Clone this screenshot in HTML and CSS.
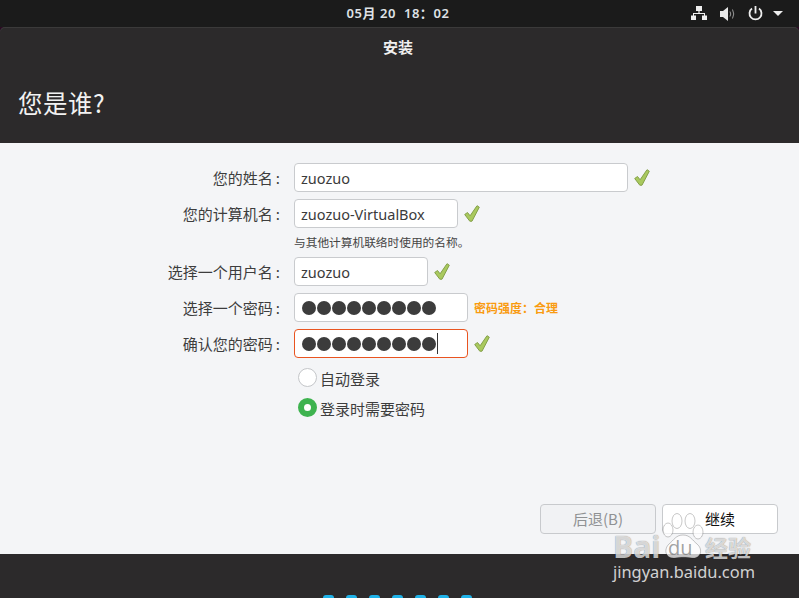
FILE: index.html
```html
<!DOCTYPE html>
<html lang="zh-CN">
<head>
<meta charset="utf-8">
<title>安装</title>
<link rel="stylesheet" href="styles.css">
</head>
<body>
<div class="screen">
  <header class="topbar">
    <div class="clock">05月 20&nbsp;&nbsp;18：02</div>
    <div class="tray">
      <svg class="ic-net" width="16" height="14" viewBox="0 0 16 14"><path fill="#eee" d="M5 0h6v5H8.600v2H14v2.500h2V14h-5V9.500h2V8H3v1.500h2V14H0V9.500h2V7h5.400V5H5z"/></svg>
      <svg class="ic-vol" width="15" height="14" viewBox="0 0 15 14"><path fill="#e8e8e8" d="M0 4h3l5-4v14l-5-4H0z"/><path fill="none" stroke="#999" d="M10 4.500q1.500 2.500 0 5M12.500 2.500q2.500 4.500 0 9"/></svg>
      <svg class="ic-pow" width="15" height="15" viewBox="0 0 15 15"><path fill="none" stroke="#eee" stroke-width="1.800" d="M4 2.600a6 6 0 1 0 7 0M7.500 0v7.500"/></svg>
      <svg class="ic-arrow" width="10" height="5" viewBox="0 0 10 5"><path fill="#eee" d="M0 0h10L5 5z"/></svg>
    </div>
  </header>
  <main class="window">
    <div class="head">
      <div class="title">安装</div>
      <h1 class="heading">您是谁?</h1>
    </div>
    <section class="content">
      <div class="form">
        <div class="row">
          <label class="label">您的姓名&#8201;:</label>
          <div class="field w-name">zuozuo</div>
          <svg class="check" width="16" height="17" viewBox="0 0 16 17"><path fill="#a9c95e" stroke="#84a04a" stroke-linejoin="round" d="M.7 9.500l2.800-2 2.600 3.300L13 .7l2.300 1.500-7.300 14H5.800z"/></svg>
        </div>
        <div class="row">
          <label class="label">您的计算机名&#8201;:</label>
          <div class="field w-host">zuozuo-VirtualBox</div>
          <svg class="check" width="16" height="17" viewBox="0 0 16 17"><path fill="#a9c95e" stroke="#84a04a" stroke-linejoin="round" d="M.7 9.500l2.800-2 2.600 3.300L13 .7l2.300 1.500-7.300 14H5.800z"/></svg>
        </div>
        <div class="hint">与其他计算机联络时使用的名称。</div>
        <div class="row">
          <label class="label">选择一个用户名&#8201;:</label>
          <div class="field w-user">zuozuo</div>
          <svg class="check" width="16" height="17" viewBox="0 0 16 17"><path fill="#a9c95e" stroke="#84a04a" stroke-linejoin="round" d="M.7 9.500l2.800-2 2.600 3.300L13 .7l2.300 1.500-7.300 14H5.800z"/></svg>
        </div>
        <div class="row">
          <label class="label">选择一个密码&#8201;:</label>
          <div class="field w-pass dots"><i></i><i></i><i></i><i></i><i></i><i></i><i></i><i></i><i></i></div>
          <span class="strength">密码强度：合理</span>
        </div>
        <div class="row">
          <label class="label">确认您的密码&#8201;:</label>
          <div class="field w-pass dots focus"><i></i><i></i><i></i><i></i><i></i><i></i><i></i><i></i><i></i><b class="caret"></b></div>
          <svg class="check" width="16" height="17" viewBox="0 0 16 17"><path fill="#a9c95e" stroke="#84a04a" stroke-linejoin="round" d="M.7 9.500l2.800-2 2.600 3.300L13 .7l2.300 1.500-7.300 14H5.800z"/></svg>
        </div>
        <div class="radios">
          <div class="radio"><span class="mark"></span><span class="radio-text">自动登录</span></div>
          <div class="radio"><span class="mark on"></span><span class="radio-text">登录时需要密码</span></div>
        </div>
      </div>
      <div class="actions">
        <button class="btn disabled">后退(B)</button>
        <button class="btn">继续</button>
      </div>
    </section>
    <footer class="foot">
      <div class="pager"><i></i><i></i><i></i><i></i><i></i><i></i><i></i></div>
    </footer>
  </main>
  <div class="watermark">
    <svg class="paw" width="44" height="48" viewBox="0 0 44 48"><g fill="#fff" fill-opacity=".72" stroke="#000" stroke-opacity=".22"><ellipse cx="6" cy="18" rx="5" ry="7"/><ellipse cx="15" cy="9" rx="5" ry="7.500"/><ellipse cx="28" cy="9" rx="5" ry="7.500"/><ellipse cx="36" cy="20" rx="5" ry="7"/><path d="M21 23c7 0 9 5 14 9 7 6 3 15-5 14-5-1-12-1-17 0-9 1-12-8-6-14 5-4 7-9 14-9z"/></g></svg>
    <div class="wm-bai">Bai</div>
    <div class="wm-du">du</div>
    <div class="wm-cn">经验</div>
    <div class="wm-url">jingyan.baidu.com</div>
  </div>
</div>
</body>
</html>
```
FILE: styles.css
```css
* { box-sizing: border-box; }
html, body { margin: 0; padding: 0; }
body { width: 799px; height: 598px; overflow: hidden; font-family: "Open Sans", "Noto Sans CJK SC", sans-serif; }
.screen { position: relative; width: 799px; height: 598px; display: flex; flex-direction: column; background: #2c0a24; overflow: hidden; }
.topbar { height: 27px; flex: none; background: #1b1b1b; display: flex; align-items: center; justify-content: center; position: relative; }
.clock { font: 600 13px/27px "Noto Sans", "Noto Sans CJK SC", sans-serif; color: #dfe2e6; letter-spacing: .55px; margin-left: -3px; }
.tray { position: absolute; right: 16px; top: 6px; display: flex; align-items: flex-start; }
.ic-net { margin-right: 13px; }
.ic-vol { margin-right: 13px; margin-top: 1px; }
.ic-pow { margin-right: 10px; }
.ic-arrow { margin-top: 5px; }
.window { flex: 1; display: flex; flex-direction: column; border-radius: 5px 5px 0 0; overflow: hidden; background: #2c2a2b; box-shadow: inset 0 1px 0 #3b3a3a; }
.head { height: 116px; flex: none; padding-top: 10px; }
.title { font: 700 15px/20px "Noto Sans CJK SC", sans-serif; color: #f0f0f0; text-align: center; padding-right: 3px; }
.heading { margin: 28px 0 0 18px; font: 400 24.500px/36px "Noto Sans CJK SC", sans-serif; color: #f2f2f2; letter-spacing: .5px; }
.content { height: 411px; flex: none; background: #f4f5f7; padding-top: 20px; display: flex; flex-direction: column; }
.form { flex: 1; display: flex; flex-direction: column; }
.row { display: flex; align-items: center; height: 29px; margin-bottom: 7px; }
.label { width: 280px; margin-right: 14px; text-align: right; font: 400 15px/29px "Noto Sans CJK SC", sans-serif; color: #3d3d3d; }
.field { height: 29px; border: 1px solid #c9cbce; border-radius: 4px; background: #fff; padding: 1px 0 0 6px; font: 400 14.500px/27px "Noto Sans", sans-serif; color: #3b3b3b; display: flex; align-items: center; }
.w-name { width: 334px; }
.w-host { width: 164px; }
.w-user { width: 134px; }
.w-pass { width: 174px; }
.check { margin-left: 6px; }
.hint { margin: -2px 0 5px 294px; font: 400 11.700px/16px "Noto Sans CJK SC", sans-serif; color: #444; height: 19px; padding-top: 1px; }
.dots { gap: 1px; padding: 0 0 0 7px; }
.dots i { width: 14px; height: 14px; border-radius: 50%; background: #3c3c3c; }
.focus { border-color: #e95420; }
.caret { width: 1px; height: 21px; background: #333; }
.strength { margin-left: 6px; font: 700 12px/16px "Noto Sans CJK SC", sans-serif; color: #f99b11; }
.radios { margin: 3px 0 0 298px; display: flex; flex-direction: column; gap: 11px; }
.radio { display: flex; align-items: center; height: 19px; color: #3d3d3d; gap: 3px; }
.radio-text { font: 400 15px/19px "Noto Sans CJK SC", sans-serif; padding-top: 2px; }
.mark { width: 19px; height: 19px; border-radius: 50%; background: #fff; border: 1px solid #c4c6c9; flex: none; }
.mark.on { background: #fff; border: 6px solid #3eb34f; }
.actions { display: flex; gap: 6px; justify-content: flex-end; padding: 0 21px 20px 0; }
.btn { width: 116px; height: 30px; border: 1px solid #c8cacd; border-radius: 4px; background: #fff; font: 400 15px/28px "Noto Sans CJK SC", sans-serif; color: #111; padding: 0; }
.btn.disabled { background: #f1f2f4; color: #8f9193; }
.foot { flex: 1; display: flex; justify-content: center; }
.pager { display: flex; gap: 12px; margin-top: 41px; height: 3px; overflow: hidden; margin-left: -5px; }
.pager i { width: 11px; height: 11px; border-radius: 3px; background: #1fb2e8; }
.watermark { position: absolute; left: 613px; top: 510px; width: 150px; height: 75px; }
.paw { position: absolute; left: 49px; top: 2px; }
.wm-bai { position: absolute; left: 0; top: 24px; height: 26px; color: rgba(255,255,255,.72); font: 700 30px/26px "Open Sans", sans-serif; text-shadow: 0 0 1px rgba(0,0,0,.55); }
.wm-du { position: absolute; left: 55px; top: 27px; height: 22px; color: rgba(110,110,110,.65); font: 400 20px/22px "Open Sans", sans-serif; }
.wm-cn { position: absolute; left: 92px; top: 24px; height: 26px; color: rgba(255,255,255,.72); font: 700 23px/26px "Noto Sans CJK SC", sans-serif; text-shadow: 0 0 1px rgba(0,0,0,.55); }
.wm-url { position: absolute; left: 0; top: 53px; height: 18px; font: 400 16.400px/18px "Noto Sans", sans-serif; color: rgba(255,255,255,.8); white-space: nowrap; }
```
